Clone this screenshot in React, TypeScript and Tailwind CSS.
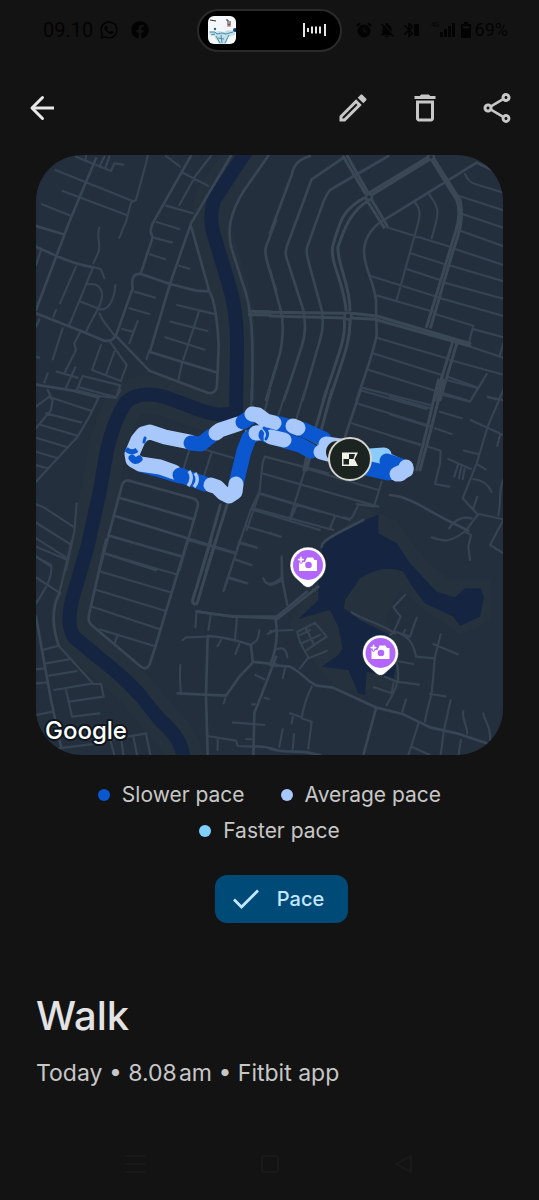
import React from "react";
import { FaWhatsapp, FaFacebook } from "react-icons/fa";
import {
  MdNotificationsOff,
  MdBluetooth,
  MdOutlineEdit,
  MdDeleteOutline,
  MdOutlineShare,
} from "react-icons/md";

const SLOW = "#0b57d0";
const AVERAGE = "#a8c7fa";
const FAST = "#8ccbff";

type Tile = { x: number; y: number; minor: string; main?: string; wide?: string };

/* Street segments, grouped by map tile; each tile is drawn at a third of its own units. */
const TILES: Tile[] = [
  {
    x: 36,
    y: 150,
    minor: `M205 20L190 50M220 20L208 55M150 18L148 30M120 20L225 63L235 40L262 44M58 60L290 153M80 123L272 195
      M18 163L100 196M335 18L330 40L300 150L285 158L270 215L250 263M190 233C180 260 195 280 188 305L172 340M175 352L195 358L205 385
      M390 18L432 50M440 68L516 107M525 18L480 75L430 165M390 167L470 190M362 216L430 237M352 263L408 277M342 313L388 328M430 347L460 356
      M15 300L0 345M120 350L72 460M60 480L52 500M170 355L100 525M156 403C185 398 200 415 198 440C196 470 170 500 148 550M134 455L185 475C215 490 235 450 238 405
      M295 425L357 443M280 475L340 492M258 537L290 545M305 513L280 580M190 490L200 510L238 560M423 465L540 493M403 515L514 543M388 562L506 599
      M488 487L442 628M438 640L427 690M340 600L332 627M10 508L0 530M80 535L50 628M133 545L115 580L120 600L85 670M195 585L168 660L255 693L272 645L222 575
      M235 605L210 675M62 665L125 683M118 652L90 713M35 670L25 697M0 620L10 623M140 678L120 725L185 742M130 712L240 742L253 706L140 678M35 720L45 740`,
    main: `M180 25L100 215L0 480M0 228L80 252M0 290L62 318C100 335 130 345 172 352M0 490L135 543L205 572C220 574 235 570 238 555
      M240 556L290 415C285 380 295 370 315 372L402 402L480 422L520 424M465 17L350 220C340 245 345 250 350 262L315 368
      M585 17L465 220L402 402L342 604M465 228L520 424C535 450 545 520 548 590L543 705C543 725 530 732 515 728L340 662L238 556M342 606L545 668M0 704L110 722L190 740
      M697 17L625 120C580 190 575 240 585 290L620 400C650 480 652 560 648 750M720 210L690 290C685 310 690 330 720 420M720 650L690 750`,
    wide: "M640 484L702 485M640 494L702 495",
  },
  {
    x: 270,
    y: 150,
    minor: `M585 72C595 95 605 100 625 105L700 128M568 138L700 181M570 190L700 233M565 240L700 289M555 297L700 345M535 345L700 394M520 397L700 446M505 443L700 498
      M422 310L525 343M412 358L510 390M302 378L500 440M322 437L495 487M495 492L610 527L595 585M612 538L700 562M435 158C455 180 450 200 440 235L380 450M475 130C515 180 505 190 485 265
      M350 232L540 290M320 563L530 625M308 610L515 675M290 658L505 725M275 713L480 765M570 580L700 623M540 630L695 673M533 680L620 712M520 730L590 750M700 580L690 615M650 672L605 745M655 742L700 750`,
    main: `M120 18C80 30 70 50 65 75L0 250M222 22L125 88L50 290C45 310 48 320 50 325L100 480C108 520 105 560 95 590L42 750M355 18L180 120C165 140 160 155 155 170L112 290C105 310 115 330 155 480C162 520 158 545 150 570L98 750
      M0 360L32 480C42 520 38 570 30 610L0 710M620 38L350 205C310 225 285 260 282 300C280 350 310 390 318 450L320 555C310 610 290 660 260 750M620 38L700 75`,
    wide: `M220 20L285 130M232 18L295 130M290 150L342 232M304 148L352 228M305 135L480 28M298 128L480 18M290 140C220 175 210 210 188 290C180 340 220 390 228 480M298 150C245 180 225 230 204 290C200 340 240 400 240 480
      M485 30L560 150C580 200 550 260 540 300L470 530M493 28L570 150C585 210 560 270 550 300L482 532M0 487L225 490M0 498L225 504M245 490L320 498L600 580M245 504L315 508L600 588M222 505C230 560 210 600 160 750M240 508C242 570 225 610 178 750M548 575L495 750M562 575L510 750`,
  },
  {
    x: 36,
    y: 390,
    minor: `M0 50L40 20L50 30M190 18L240 24L253 0M38 20L165 62M120 0L190 18L160 80L125 140L60 210L0 275M50 28L45 60L0 115M30 70L135 97M15 105L125 137M0 143L95 172M0 185L65 205M0 225L35 235
      M122 340L115 425L90 540M0 343L20 350L115 412M0 398L102 462M0 445L95 505M0 500L45 530M460 180L443 235M526 190L500 270M450 162L590 203`,
    main: `M190 540L258 285C262 275 270 270 280 272L470 325C485 330 488 338 485 350L430 540M250 323L470 387M235 377L600 490M220 437L440 500M205 490L360 540`,
    wide: "M553 345L498 540M573 345L512 540",
  },
  {
    x: 230,
    y: 390,
    minor: `M105 200L295 250M95 250L445 350M90 310L360 390M70 355L310 420M105 200C95 215 98 225 95 245L88 310L50 420M240 205L225 240L180 385M225 235L445 300M385 345L370 375C365 390 355 388 340 382M315 380L300 415M455 275L432 350L380 342
      M64 0L64 50M120 0L105 60M170 0L145 75M225 0L198 90M388 0L590 57M380 40L600 108M365 100L570 165`,
    main: `M392 0L345 140`,
    wide: "M290 0L258 110M306 0L275 115M230 200L222 240M240 200L230 240",
  },
  {
    x: 36,
    y: 540,
    minor: `M108 0L70 160M0 20L90 58M0 50L45 75C50 100 40 130 0 190M0 112L35 135L70 158M20 330L68 317L170 430L55 450M30 370L98 358M40 407L122 393M0 430L35 427M0 388L25 385
      M170 432L195 432L203 470L100 485M90 450L108 530L190 520M0 525L50 515M70 625L185 610M220 590L235 645M255 590L262 645M220 600L330 580L343 645M292 590L303 645M245 285L235 312
      M260 0L440 50M205 40L420 103M195 95L403 157M182 150L387 212M168 200L370 267M190 268L355 318M612 10L662 23M600 60L645 75M580 115L633 130M455 0L595 40M612 0L565 150
      M682 115C690 135 705 135 718 128M482 213L478 262M525 220L517 270M603 233L597 300M555 300L545 318M610 312L598 342M670 270C668 300 660 305 648 312M720 270L695 282M433 375C430 410 433 440 435 460M440 300L450 292L515 290M568 475L563 490M658 405L685 418M590 547L685 555M685 473L698 477M545 595L545 630M515 588L600 602L605 618L650 620M630 597L645 598M648 493L658 493`,
    main: `M72 158C40 210 55 280 68 317M0 230L45 480L75 620M210 0L160 220C155 240 160 252 170 258L315 380C325 388 335 385 340 375L355 330L455 0
      M482 213C560 230 640 232 720 235M515 645L510 468L515 288C560 290 600 300 645 315L650 365L720 373M425 460L570 467L610 410L648 370M720 350L690 430L655 520L652 645M652 620C680 618 700 622 720 630`,
    wide: "M525 0L470 180C468 195 482 196 485 185L540 0",
  },
  {
    x: 270,
    y: 520,
    minor: `M0 38L32 50M35 110L38 180L52 255M0 195C20 190 30 185 38 178M0 333L68 330M82 335L135 308L170 350L110 390M82 335C85 370 110 400 115 412L90 445M108 325L130 370M90 345L120 330M95 370L150 345M115 415L170 393M20 388C40 380 50 390 52 412M45 445L38 475
      M125 500C110 530 100 560 95 595L125 605L115 685M60 580L95 592M70 583L65 610M38 628L28 680M72 643L68 690M405 225L370 262L392 290L370 338L360 345M440 293L420 350L405 345M405 330L398 345
      M375 335C410 345 430 365 438 410L495 415M380 423L430 432M512 343L495 410L485 520C478 550 470 570 465 605M490 372L563 403M380 430C390 470 385 500 350 555M345 470L380 485L447 494M312 502L365 520L370 490M480 522L527 529M408 538L397 575M445 612L415 705M542 540L522 630L512 705M580 573C575 600 590 610 592 640M640 580C645 610 665 620 660 660M572 660L566 705M425 680L480 705
      M245 277C280 300 330 310 375 340`,
    main: `M145 200L20 298M155 80C155 65 170 55 280 0M17 300C25 350 15 400 0 435L60 440C100 460 110 485 140 497L190 503L320 563L400 583L480 622L560 640L650 670M318 565L280 705M0 686C50 700 80 692 110 697L150 705`,
  },
  {
    x: 390,
    y: 380,
    minor: `M170 0L262 24M280 0L240 65L160 45M0 50L120 85M0 103L110 138M0 167L90 193M150 95L215 115M135 145L185 162M115 200L152 212L150 250L135 312L178 320M293 50L318 58M242 120L340 165M330 165L322 198M222 212L263 222M175 237L243 267M205 250L193 290M215 255L207 295M225 260L218 297M260 252L287 268M250 297C280 300 295 315 305 335M340 300C325 330 335 350 325 405M262 350L250 385M178 445L185 435M180 440C200 415 225 410 245 415
      M125 472C160 485 180 490 230 450M340 420L300 495L340 520M340 30L293 140L260 250L218 355L260 400M340 418L265 402L225 455L243 465L235 500L240 540`,
    main: "M0 345C60 350 110 390 170 420L235 452",
    wide: "M145 0L110 150L80 270M160 0L125 140L90 270",
  },
  {
    x: 190,
    y: 490,
    minor: `M205 10L180 65L100 303M210 12L390 65M185 58L390 120M165 108L272 140M148 155L200 173M135 208L185 225M118 262L172 280M322 42L300 90M275 200L275 265L292 345M220 265C225 285 245 290 275 262`,
    main: "M350 305L260 380M20 365L130 380L260 380",
  },
];

const RIVER =
  "M247 150L214 200Q209 215 213 232L229 285Q237 310 237 345L236 412Q222 418 200 410L165 397Q140 390 126 402Q114 420 107 450L100 490L88 545L72 600Q66 625 74 637L98 657Q125 678 140 695L160 720Q182 738 184 760";

/* Pace segments in paint order. */
const ROUTE: [string, string][] = [
  [AVERAGE, "M406 469L378 456L372 458M406 469L400 474L372 468"],
  [FAST, "M370 456L384 455"],
  [SLOW, "M387 461L402 466"],
  [SLOW, "M366 468L388 473"],
  [AVERAGE, "M406 467L406 470L397 474"],
  [SLOW, "M142 465L160 470L180 476"],
  [AVERAGE, "M190 442L165 437L150 432L143 434L138 440L132 454L133 460L140 464L160 467L174 472"],
  [SLOW, "M191 443L201 444L211 436"],
  [AVERAGE, "M216 433L220 430L238 424"],
  [SLOW, "M243 422L252 416"],
  [SLOW, "M276 423L292 427L304 430L324 439"],
  [AVERAGE, "M252 414L258 415L266 421L274 423"],
  [AVERAGE, "M293 426L298 428"],
  [AVERAGE, "M326 444L340 446"],
  [SLOW, "M236 484L244 451L249 438L256 433"],
  [AVERAGE, "M256 433L261 433"],
  [SLOW, "M266 435L286 441L300 445L311 451"],
  [AVERAGE, "M271 437L284 440"],
  [AVERAGE, "M321 452L336 456"],
  [SLOW, "M180 475L188 478L197 481L205 484"],
  [AVERAGE, "M211 485L217 487L223 493L229 496L235 492L236 484"],
];

function PhotoPin({ x, y }: { x: number; y: number }) {
  return (
    <g transform={`translate(${x} ${y})`}>
      <path d="M0 22.500C-2 22.500-4 21-6 19L-12 13.500A18 18 0 1 1 12 13.500L6 19C4 21 2 22.500 0 22.500Z" fill="#fff" stroke="#141c26" strokeOpacity="0.5" />
      <circle r="15" fill="#b266fa" />
      <path d="M-9-3h6l2-4.500h6l1.500 2.500h2.500v11h-18z" fill="#fff" />
      <circle cx="0.500" cy="0" r="3.300" fill="#b266fa" />
      <path d="M-7-8v5M-9.500-5.500h5" stroke="#b266fa" strokeWidth="3.500" />
      <path d="M-7-7.700v4.600M-9.300-5.400h4.600" stroke="#fff" strokeWidth="1.600" />
    </g>
  );
}

function RouteMap() {
  return (
    <svg
      viewBox="36 155 467 600"
      className="block w-full"
      role="img"
      aria-label="Map of the walk"
      fill="none"
      strokeLinecap="round"
      strokeLinejoin="round"
    >
      <rect x="36" y="155" width="467" height="600" fill="#232f3c" />
      <path d={RIVER} stroke="#25323d" strokeWidth="38" />
      <path d="M360 505L395 520L425 560L450 580L490 580L492 620L460 635L425 610L400 590L385 620L400 640L400 690L340 690L320 670L290 625L320 560Z" fill="#25323d" />
      <path d={RIVER} stroke="#152440" strokeWidth="14" />
      <path
        transform="translate(270 520) scale(.33333)"
        fill="#152440"
        d="M285 0L325-16L325 40L380 70L420 130L500 215L555 232L585 205L632 205L642 230L630 290L570 318L550 290L465 250L430 205L400 155Q340 130 270 175L225 240L222 265L270 300L360 345L380 430L370 475L290 455L285 525L265 520L235 450L155 440L205 405L218 385L205 320L180 270L85 297L145 240L145 140L160 75L200 42Z"
      />
      {TILES.map((t) => (
        <g key={`${t.x}-${t.y}`} transform={`translate(${t.x} ${t.y}) scale(.33333)`}>
          <path d={t.minor} stroke="#364352" strokeWidth="6.500" />
          {t.main && <path d={t.main} stroke="#384554" strokeWidth="8" />}
          {t.wide && <path d={t.wide} stroke="#3a4755" strokeWidth="9" />}
        </g>
      ))}
      <circle cx="369" cy="197" r="3" fill="#232f3c" stroke="#3a4755" strokeWidth="2.500" />
      <circle cx="348" cy="316" r="3.500" fill="#232f3c" stroke="#3a4755" strokeWidth="2.500" />
      <circle cx="431" cy="157" r="3" fill="#232f3c" stroke="#3a4755" strokeWidth="2.500" />

      <path d="M256 426L275 427L300 434L322 446M246 431L238 460" stroke="#6f8ba0" strokeWidth="2" />
      {ROUTE.map(([color, d]) => (
        <path key={d} d={d} stroke={color} strokeWidth="15" />
      ))}
      <path d="M126 449Q131 454 137 450" stroke={SLOW} strokeWidth="5" strokeLinecap="butt" />
      <path d="M132 458Q135 462 139 459" stroke={SLOW} strokeWidth="7" />
      <path d="M144 442L145 438" stroke={SLOW} strokeWidth="3" />
      <path d="M189 471Q194 478 188 486M195 473Q200 480 194 487" stroke={AVERAGE} strokeWidth="3.500" strokeLinecap="butt" />
      <path d="M261 427Q269 433 265 440" stroke={AVERAGE} strokeWidth="3" />
      <path d="M264 428Q270 433 266 439" stroke={SLOW} strokeWidth="3" />

      <circle cx="337" cy="452" r="11" fill="#1b221f" />
      <circle cx="350" cy="459" r="21" fill="#1c2422" stroke="#d5d4cc" strokeWidth="2" />
      <path d="M342 452.500h16l-3.500 6.700 3.500 6.700h-16z" fill="#f1f1ea" />
      <path d="M343.500 459h5.500v5.500h-5.500zM349 454h6l-1.500 5H349z" fill="#1c2422" />

      <PhotoPin x={308} y={565} />
      <PhotoPin x={380.5} y={653} />

      <text
        x="45"
        y="739"
        className="font-['Inter',sans-serif] text-[24px] font-medium"
        fill="#fff"
        stroke="#10161d"
        strokeWidth="4"
        paintOrder="stroke"
      >
        Google
      </text>
    </svg>
  );
}

function LegendItem({ label, dot }: { label: string; dot: string }) {
  return (
    <li className="flex h-9 items-center gap-3">
      <span className={`size-3 rounded-full ${dot}`} />
      {label}
    </li>
  );
}

function StatusBar() {
  return (
    <div className="grid h-15 grid-cols-[1fr_auto_1fr] items-center font-['Roboto',sans-serif] text-xl text-[#030303]">
      <div className="flex items-center pl-[43px]">
        <span>09.10</span>
        <FaWhatsapp className="ml-1.5 size-5" />
        <FaFacebook className="ml-3 size-[18px]" />
      </div>
      <div className="flex h-[43px] w-[145px] items-center justify-between rounded-full border-2 border-[#2a2a2a] bg-black pr-3 pl-[9px]">
        <svg viewBox="0 0 28 28" className="size-7 rounded-md bg-[#f4f8fa]" aria-hidden="true">
          <path d="M1 15l6 1 4-1 5 1 4-2 7 1v4l-7 2-2 7h-7l-5-8-5-2z" fill="#c3dfe9" />
          <path d="M2 16h5l2 2 5-1 4 1 7-2M8 20l4 7M21 19l-4 8M13 19l1 8M10 22l6 1M3 19l4-1" stroke="#478ca5" strokeWidth="1" fill="none" />
          <path d="M18 4h2v5h2V5M2 4l6 1" stroke="#35282d" fill="none" />
          <path d="M19 10h4" stroke="#d04a5e" />
          <circle cx="27" cy="14" r="2" fill="#173e74" />
          <circle cx="7" cy="13" r="1.200" fill="#2e647d" />
        </svg>
        <svg viewBox="0 0 26 16" className="h-4 w-[26px]" stroke="#e6e6e6" strokeWidth="2" aria-hidden="true">
          <path d="M2 1v14M6 6v4M10 4.500v7M14 4.500v7M18 4.500v7M23 2v12" />
        </svg>
      </div>
      <div className="flex items-center justify-end pr-[31px]">
        <svg viewBox="0 0 16 16" className="size-4" aria-hidden="true">
          <circle cx="8" cy="9" r="6.500" fill="currentColor" />
          <path d="M1 4l3-3M15 4l-3-3" stroke="currentColor" strokeWidth="2" />
          <path d="M8 5.500V9l2.500 1.500" fill="none" stroke="#131313" strokeWidth="1.200" />
        </svg>
        <MdNotificationsOff className="ml-1.5 size-[18px]" />
        <MdBluetooth className="ml-1 size-[18px]" />
        <svg viewBox="0 0 5 14" className="-ml-1 h-3.5 w-[5px]" fill="currentColor" aria-hidden="true">
          <rect y="1" width="5" height="12" rx="1" />
        </svg>
        <span className="ml-3 mb-2 text-[7px]">4G</span>
        <svg viewBox="0 0 15 14" className="h-3.5 w-[15px]" fill="currentColor" aria-hidden="true">
          <path d="M0 9h3v5H0zM4 6h3v8H4zM8 3h3v11H8zM12 0h3v14h-3z" />
        </svg>
        <svg viewBox="0 0 10 16" className="ml-1.5 h-4 w-2.5" fill="currentColor" aria-hidden="true">
          <path d="M3 0h4v2h3v14H0V2h3zM2 4v2.500h6V4z" fillRule="evenodd" />
        </svg>
        <span className="ml-1 text-lg">69%</span>
      </div>
    </div>
  );
}

export default function App() {
  return (
    <div className="flex min-h-screen flex-col bg-[#131313] font-['Inter',sans-serif] text-[#c7c7c7]">
      <StatusBar />

      <header className="flex h-[95px] items-center justify-between px-6">
        <button type="button" aria-label="Back" className="flex size-9 items-center justify-center text-[#e8e8e8]">
          <svg viewBox="0 0 36 36" className="size-9" fill="none" stroke="currentColor" strokeWidth="3">
            <path d="M30 18H8" />
            <path d="M18.500 7.500L8 18l10.500 10.500" strokeLinecap="round" strokeLinejoin="round" />
          </svg>
        </button>
        <div className="flex gap-9">
          <button type="button" aria-label="Edit">
            <MdOutlineEdit className="size-9" />
          </button>
          <button type="button" aria-label="Delete">
            <MdDeleteOutline className="size-9" />
          </button>
          <button type="button" aria-label="Share">
            <MdOutlineShare className="size-9" />
          </button>
        </div>
      </header>

      <main className="flex flex-col px-9">
        <div className="overflow-hidden rounded-[46px]">
          <RouteMap />
        </div>

        <ul className="mt-[22px] flex flex-wrap justify-center gap-x-9 text-[21px]">
          <LegendItem label="Slower pace" dot="bg-[#0b57d0]" />
          <LegendItem label="Average pace" dot="bg-[#a8c7fa]" />
          <LegendItem label="Faster pace" dot="bg-[#7fcfff]" />
        </ul>

        <button
          type="button"
          aria-pressed="true"
          className="mt-[26px] ml-6 flex h-12 items-center gap-4 self-center rounded-xl bg-[#004a77] px-[18px] pr-6 text-[20px] font-medium text-[#c2e7ff]"
        >
          <svg viewBox="0 0 28 24" className="h-6 w-7" fill="none" stroke="currentColor" strokeWidth="2.800" aria-hidden="true">
            <path d="M1 12.500l7.500 7.500L25 3.500" />
          </svg>
          Pace
        </button>

        <h1 className="mt-[69px] text-[40px] leading-12 font-medium text-[#e3e3e3]">Walk</h1>
        <p className="mt-[17px] text-[23px] leading-8">Today • 8.08&#8202;am • Fitbit app</p>
      </main>

      <nav aria-label="System" className="mt-auto flex h-18 items-center justify-evenly px-2.5 text-[#191919]">
        <button type="button" aria-label="Recent apps">
          <svg viewBox="0 0 20 20" className="size-5" stroke="currentColor" strokeWidth="2">
            <path d="M0 2h20M0 10h20M0 18h20" />
          </svg>
        </button>
        <button type="button" aria-label="Home">
          <svg viewBox="0 0 20 20" className="size-5" fill="none" stroke="currentColor" strokeWidth="2">
            <rect x="2" y="2" width="16" height="16" rx="2" />
          </svg>
        </button>
        <button type="button" aria-label="Go back">
          <svg viewBox="0 0 20 20" className="size-5" fill="none" stroke="currentColor" strokeWidth="2">
            <path d="M17 2v16L2 10z" strokeLinejoin="round" />
          </svg>
        </button>
      </nav>
    </div>
  );
}
